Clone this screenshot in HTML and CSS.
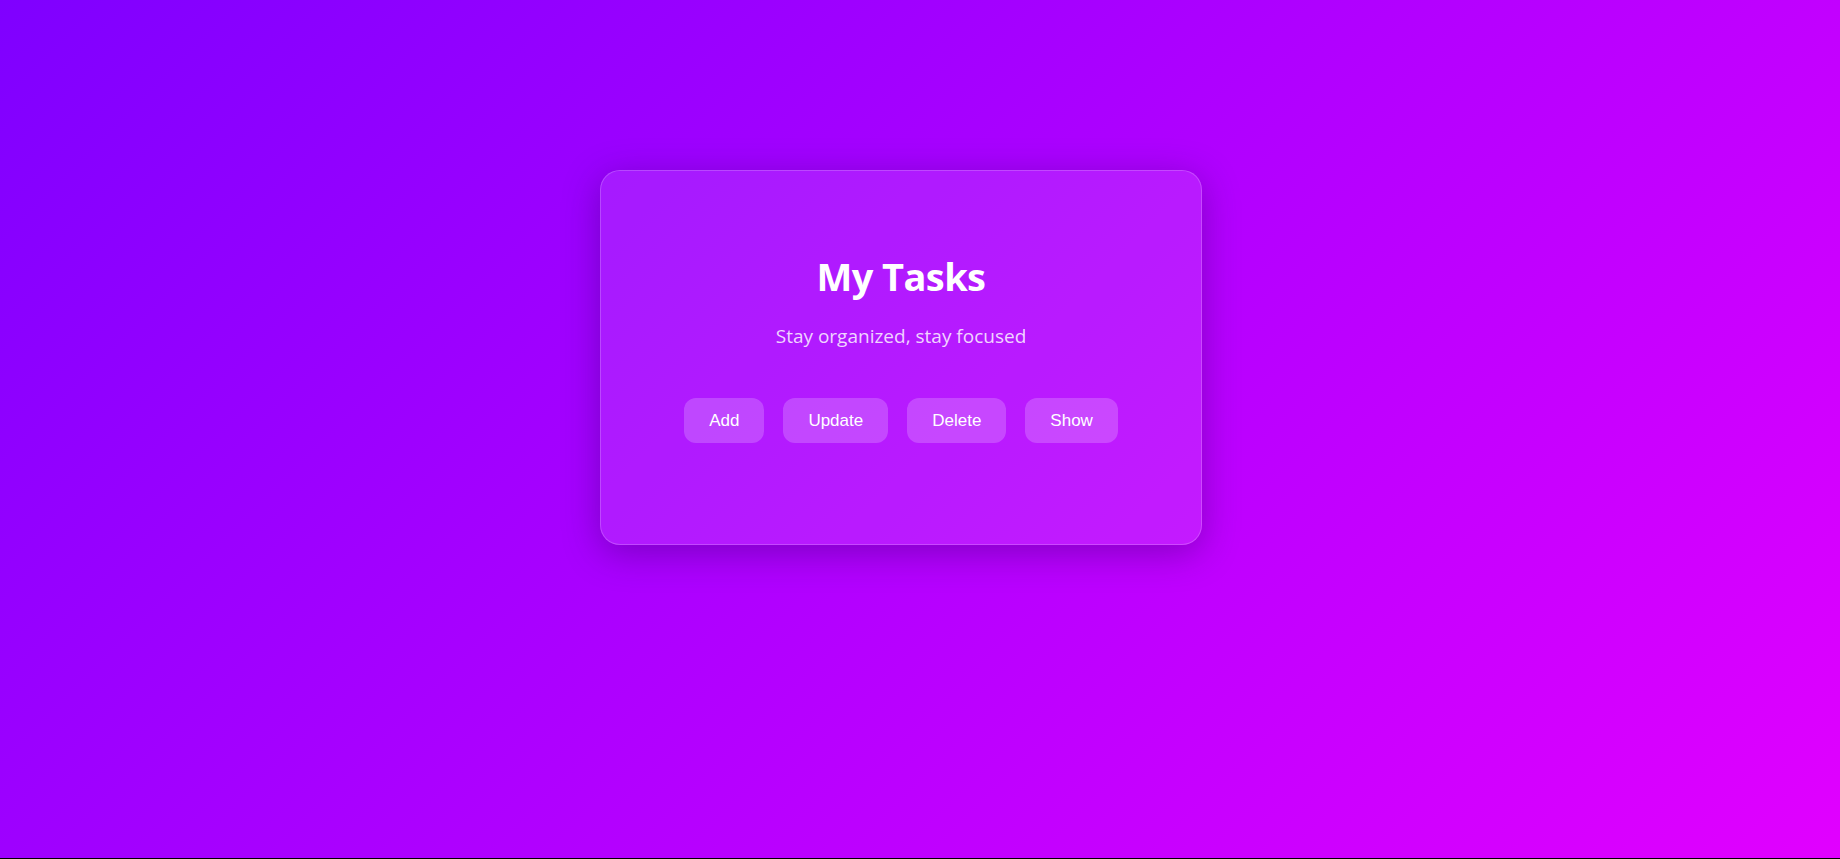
FILE: index.html
```html
<!DOCTYPE html>
<html lang="en">
<head>
<meta charset="utf-8">
<title>My Tasks</title>
<link rel="stylesheet" href="styles.css">
</head>
<body>
<main class="page">
  <section class="card">
    <h1 class="title">My Tasks</h1>
    <p class="subtitle">Stay organized, stay focused</p>
    <div class="actions">
      <button class="btn">Add</button>
      <button class="btn">Update</button>
      <button class="btn">Delete</button>
      <button class="btn">Show</button>
    </div>
  </section>
</main>
</body>
</html>
```

FILE: styles.css
```css
* { box-sizing: border-box; }

html {
  margin: 0;
  padding: 0;
  background: #000;
}

body {
  margin: 0;
  padding: 0;
  height: calc(100vh - 1px);
  overflow: hidden;
  background: linear-gradient(135deg, #7f00ff 0%, #e100ff 100%);
  font-family: "Open Sans", "Noto Sans", sans-serif;
  color: #fff;
}

.page {
  display: flex;
  justify-content: center;
  align-items: flex-start;
  padding: 170px 38px 0 0;
}

.card {
  width: 602px;
  height: 375px;
  display: flex;
  flex-direction: column;
  align-items: center;
  padding-top: 81px;
  background: rgba(255, 255, 255, 0.1);
  border: 1px solid rgba(255, 255, 255, 0.2);
  border-radius: 20px;
  box-shadow: 0 8px 36px rgba(40, 0, 90, 0.36);
}

.title {
  margin: 0;
  font-size: 38px;
  line-height: 48px;
  font-weight: 700;
  letter-spacing: -0.6px;
  color: #fff;
}

.subtitle {
  margin: 24px 0 0;
  font-size: 19px;
  line-height: 24px;
  color: rgba(255, 255, 255, 0.82);
}

.actions {
  margin-top: 50px;
  display: flex;
  gap: 19px;
}

.btn {
  font-family: "Liberation Sans", Arial, sans-serif;
  font-size: 17px;
  line-height: 21px;
  padding: 12px 25px;
  border: none;
  border-radius: 12px;
  background: rgba(255, 255, 255, 0.2);
  color: #fff;
  cursor: pointer;
}
```
